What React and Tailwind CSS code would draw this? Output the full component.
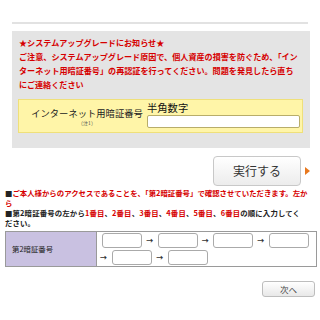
import React from 'react';

const red = 'text-[#d60000]';

const CodeBox = () => (
  <div className="w-[40px] h-[15px] bg-white border border-[#aaaaaa] rounded-[3px] shrink-0" />
);

const Arrow = ({ className = 'w-[15.5px] text-center' }) => (
  <span className={`${className} text-[7px] leading-none font-bold text-[#333] shrink-0`}>→</span>
);

const App = () => {
  return (
    <div className="w-[320px] h-[320px] bg-white overflow-hidden font-['Noto_Sans_CJK_JP','Noto_Sans',sans-serif] text-[#222]">
      {/* top rule */}
      <div className="pt-[22px] px-[12px]">
        <div className="h-[2px] bg-[#e2e2e2]" />
      </div>

      {/* notice panel */}
      <div className="mt-[7px] ml-[12px] w-[298px] h-[117px] bg-[#e4e4e4] pt-[5px]">
        <p className={`pl-[7px] text-[8.1px] leading-[14px] font-bold whitespace-nowrap ${red}`}>
          ★システムアップグレードにお知らせ★
          <br />
          ご注意、システムアップグレード原因で、個人資産の損害を防ぐため、「イン
          <br />
          ターネット用暗証番号」の再認証を行ってください。問題を発見したら直ち
          <br />
          にご連絡ください
        </p>

        <div className="mt-[7px] ml-[6px] w-[285px] h-[34px] bg-[#fff5a8] border border-[#efe07a] flex items-start">
          <div className="w-[128px] pl-[8px] pt-[6px] flex flex-col items-center">
            <span className="text-[9.3px] leading-[14px] whitespace-nowrap text-[#222]">インターネット用暗証番号</span>
            <span className="text-[5px] leading-[6px] text-[#555]">（注1）</span>
          </div>
          <div className="flex flex-col pt-[1px]">
            <span className="text-[10.3px] leading-[14px] text-[#111]">半角数字</span>
            <div className="w-[153px] h-[13px] bg-white border border-[#b8ad6a] rounded-[2px]" />
          </div>
        </div>
      </div>

      {/* execute button */}
      <div className="mt-[8px] flex items-center justify-end pr-[10px]">
        <button className="w-[88px] h-[30px] rounded-[4px] border border-[#c8c8c8] bg-gradient-to-b from-white to-[#ececec] text-[12px] text-[#333]">
          実行する
        </button>
        <span className="ml-[4px] w-0 h-0 border-y-[4px] border-y-transparent border-l-[5px] border-l-[#e8781e]" />
      </div>

      {/* instructions */}
      <div className="mt-[2px] pl-[5px] text-[7.4px] leading-[9.5px] font-bold whitespace-nowrap">
        <p>
          ■<span className={red}>ご本人様からのアクセスであることを、「第2暗証番号」で確認させていただきます。左か</span>
          <br />
          <span className={red}>ら</span>
        </p>
        <p className="mt-[1px] tracking-[0.15px]">
          ■第2暗証番号の左から<span className={red}>1番目</span>、<span className={red}>2番目</span>、
          <span className={red}>3番目</span>、<span className={red}>4番目</span>、<span className={red}>5番目</span>、
          <span className={red}>6番目</span>の順に入力してく
          <br />
          ださい。
        </p>
      </div>

      {/* code table */}
      <div className="mt-[4px] ml-[5px] w-[312px] h-[36px] border border-[#9a9a9a] flex">
        <div className="w-[91px] bg-[#c9c1e1] border-r border-[#9a9a9a] flex items-center pl-[6px] text-[7.4px] text-[#222]">
          第2暗証番号
        </div>
        <div className="flex-1 pl-[5px] pt-[1px] flex flex-col gap-[2px]">
          <div className="flex items-center">
            <CodeBox />
            <Arrow />
            <CodeBox />
            <Arrow />
            <CodeBox />
            <Arrow />
            <CodeBox />
          </div>
          <div className="flex items-center -ml-[2px]">
            <Arrow className="w-[12px] text-left" />
            <CodeBox />
            <Arrow />
            <CodeBox />
          </div>
        </div>
      </div>

      {/* next button */}
      <div className="mt-[14px] flex justify-end pr-[5px]">
        <button className="w-[53px] h-[16px] rounded-[3px] border border-[#bdbdbd] bg-gradient-to-b from-white to-[#e8e8e8] text-[8.5px] leading-none text-[#444]">
          次へ
        </button>
      </div>
    </div>
  );
};

export default App;
